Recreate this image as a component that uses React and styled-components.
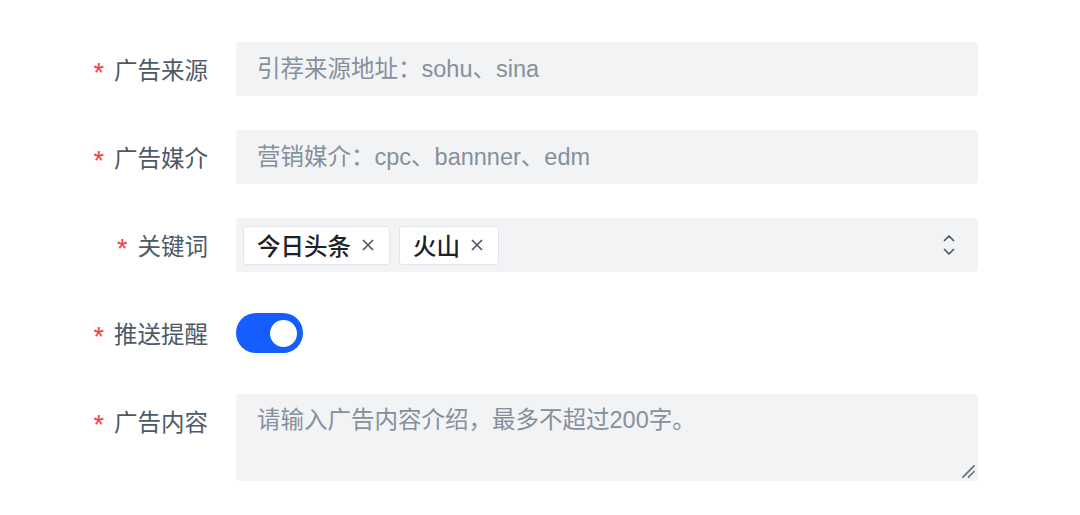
import React from "react";
import styled, { createGlobalStyle } from "styled-components";

const GlobalStyle = createGlobalStyle`
  html, body {
    margin: 0;
    padding: 0;
    background: #ffffff;
  }
  body {
    font-family: "Liberation Sans", "Noto Sans CJK SC", sans-serif;
  }
`;

const tags = ["今日头条", "火山"];

function App() {
  return (
    <>
      <GlobalStyle />
      <FormWrapper>
        <FormRow>
          <Label>
            <Star>*</Star>广告来源
          </Label>
          <TextInput placeholder="引荐来源地址：sohu、sina" />
        </FormRow>
        <FormRow>
          <Label>
            <Star>*</Star>广告媒介
          </Label>
          <TextInput placeholder="营销媒介：cpc、bannner、edm" />
        </FormRow>
        <FormRow>
          <Label>
            <Star>*</Star>关键词
          </Label>
          <SelectBox>
            <TagList>
              {tags.map((tag) => (
                <Tag key={tag}>
                  {tag}
                  <CloseIcon viewBox="0 0 16 16">
                    <path d="M3 3 L13 13 M13 3 L3 13" />
                  </CloseIcon>
                </Tag>
              ))}
            </TagList>
            <ArrowIcon viewBox="0 0 12 24">
              <path d="M1.5 7.5 L6 3 L10.5 7.5" />
              <path d="M1.5 16.5 L6 21 L10.5 16.5" />
            </ArrowIcon>
          </SelectBox>
        </FormRow>
        <FormRow>
          <Label>
            <Star>*</Star>推送提醒
          </Label>
          <ControlCell>
            <Switch $checked>
              <Knob />
            </Switch>
          </ControlCell>
        </FormRow>
        <FormRow>
          <Label>
            <Star>*</Star>广告内容
          </Label>
          <TextAreaWrap>
            <TextArea placeholder="请输入广告内容介绍，最多不超过200字。" />
            <ResizeHandle viewBox="0 0 16 16">
              <path d="M2 14 L14 2" />
              <path d="M8 14 L14 8" />
            </ResizeHandle>
          </TextAreaWrap>
        </FormRow>
      </FormWrapper>
    </>
  );
}

const FormWrapper = styled.div`
  display: flex;
  flex-direction: column;
  gap: 34px;
  padding-top: 42px;
`;

const FormRow = styled.div`
  display: grid;
  grid-template-columns: 208px 742px;
  column-gap: 28px;
  align-items: start;
`;

const Label = styled.div`
  height: 54px;
  display: flex;
  align-items: center;
  justify-content: flex-end;
  font-size: 23.5px;
  color: #4e5969;
  white-space: nowrap;
`;

const Star = styled.span`
  color: #f53f3f;
  font-size: 27px;
  font-weight: 400;
  margin-right: 10px;
  position: relative;
  top: 4px;
`;

const TextInput = styled.input`
  box-sizing: border-box;
  width: 100%;
  height: 54px;
  border: none;
  outline: none;
  border-radius: 4px;
  background: #f2f3f5;
  padding: 0 21px;
  font-family: inherit;
  font-size: 23.5px;
  color: #1d2129;

  &::placeholder {
    color: #86909c;
  }
`;

const SelectBox = styled.div`
  box-sizing: border-box;
  height: 54px;
  border-radius: 4px;
  background: #f2f3f5;
  display: flex;
  align-items: center;
  justify-content: space-between;
  padding: 0 23px 0 7px;
`;

const TagList = styled.div`
  display: flex;
  gap: 9px;
`;

const Tag = styled.span`
  box-sizing: border-box;
  height: 39px;
  display: inline-flex;
  align-items: center;
  gap: 9px;
  padding: 0 13px;
  background: #ffffff;
  border: 1px solid #e5e6eb;
  border-radius: 3px;
  font-size: 23.5px;
  font-weight: 500;
  color: #1d2129;
`;

const CloseIcon = styled.svg`
  width: 16px;
  height: 16px;
  fill: none;
  stroke: #4e5969;
  stroke-width: 1.7;
`;

const ArrowIcon = styled.svg`
  width: 12px;
  height: 24px;
  fill: none;
  stroke: #4e5969;
  stroke-width: 1.7;
  stroke-linecap: round;
  stroke-linejoin: round;
`;

const ControlCell = styled.div`
  height: 54px;
  display: flex;
  align-items: center;
`;

const Switch = styled.div`
  box-sizing: border-box;
  width: 67px;
  height: 40px;
  border-radius: 20px;
  background: ${(p) => (p.$checked ? "#165dff" : "#c9cdd4")};
  display: flex;
  align-items: center;
  justify-content: ${(p) => (p.$checked ? "flex-end" : "flex-start")};
  padding: 0 6px;
`;

const Knob = styled.span`
  width: 27px;
  height: 27px;
  border-radius: 50%;
  background: #ffffff;
`;

const TextAreaWrap = styled.div`
  position: relative;
  height: 87px;
`;

const TextArea = styled.textarea`
  box-sizing: border-box;
  display: block;
  width: 100%;
  height: 87px;
  border: none;
  outline: none;
  border-radius: 4px;
  background: #f2f3f5;
  padding: 9px 21px;
  font-family: inherit;
  font-size: 23.5px;
  line-height: 35px;
  color: #1d2129;
  resize: none;

  &::placeholder {
    color: #86909c;
  }
`;

const ResizeHandle = styled.svg`
  position: absolute;
  right: 2px;
  bottom: 2px;
  width: 15px;
  height: 15px;
  fill: none;
  stroke: #6b7280;
  stroke-width: 1.8;
  stroke-linecap: round;
  pointer-events: none;
`;

export default App;
